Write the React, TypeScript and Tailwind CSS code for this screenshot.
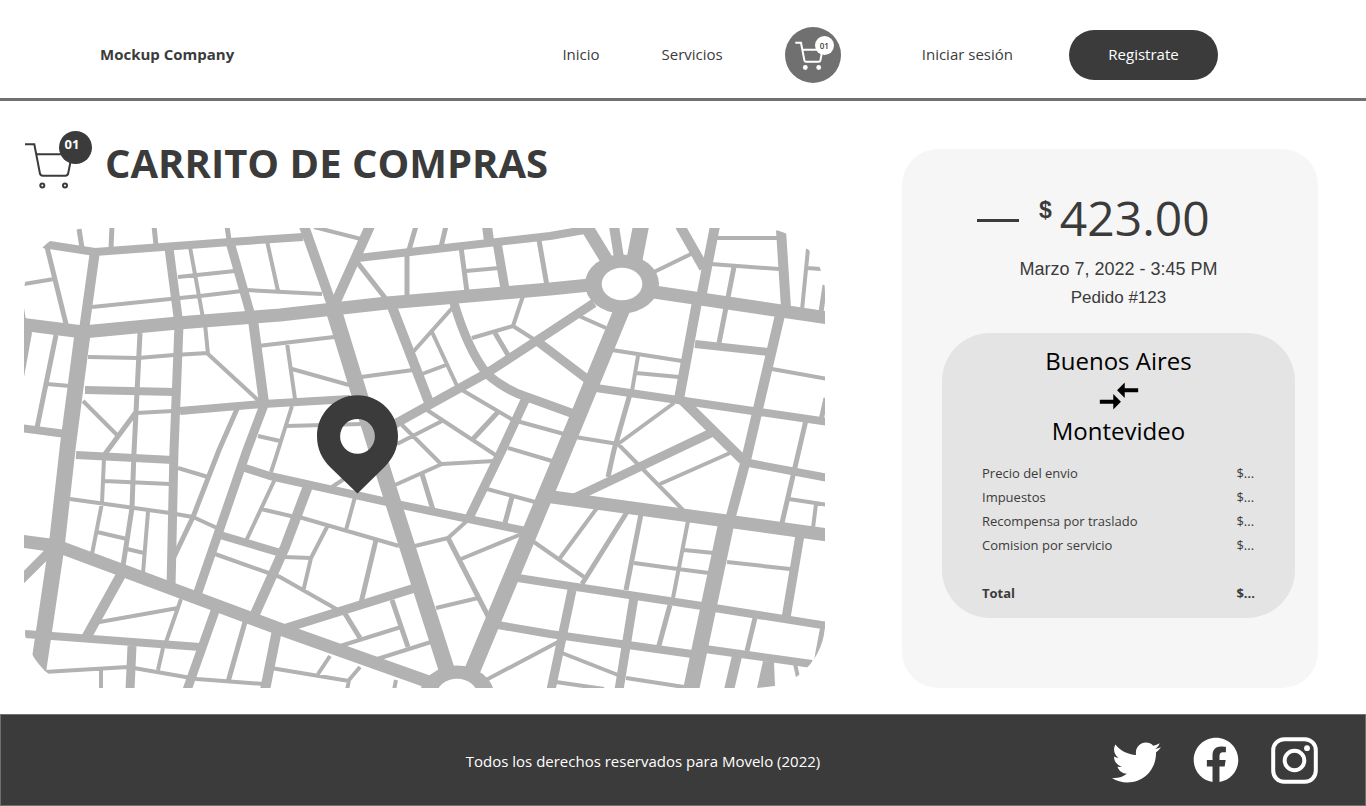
import { FaFacebook, FaTwitter } from "react-icons/fa";
import { MdCompareArrows } from "react-icons/md";

type RoadGroup = { width: number; d: string };

const roads: RoadGroup[] = [
  {
    width: 16,
    d: "M83 330 68 445 57 543 38 672M333 308 359 393 385 477 450 680M626 300 560 460 470 676M641 226 634 262M727 520 691 690",
  },
  {
    width: 13,
    d: "M20 324 83 332 178 323 280 315 387 303 550 289 590 285M654 292 828 318M20 541 57 546 280 629 432 683M545 496 828 535M586 226 608 262",
  },
  {
    width: 10,
    d: "M95 251 84 330M253 320 264 403M304 226 333 308M370 226 334 306M487 226 489 241M391 304 430 405M680 226 704 268M781 230 786 308M780 315 746 460 731 516M682 400 743 460M122 573 86 638M277 630 265 690M737 656 729 690M614 226 619 258M308 486 285 547 255 614M697 302 679 399M715 226 701 298",
  },
  {
    width: 9,
    d: "M169 248 179 325 174 450 171 588M230 242 251 316M264 405 247 450 197 595M497 242 505 289M454 303Q468 350 487 374Q505 390 527 397L574 414M393 425 487 373 550 332 594 303M537 341 587 379M527 396 502 450 469 518M711 433 572 499M20 581 49 552M215 611 187 690M132 646 130 690M283 629 415 588M572 590 551 690M634 597 619 690M800 535 786 618",
  },
  {
    width: 8,
    d: "M43 244 95 252 230 242 303 237M358 258 550 236 590 229M180 411 263 404 350 399M76 455 173 460M596 388 828 422M25 634 200 647M245 468 270 476 387 502 526 531M220 535 284 554M518 578 550 583 702 606 828 626M498 625 550 634 692 654M695 344 768 352M85 390 175 392M20 428 66 434M705 649 812 664M749 463 828 478",
  },
  {
    width: 5,
    d: "M79 229 82 248M112 226 111 248M154 226 156 245M227 226 229 240M47 247 67 328M56 335 37 428M136 412 105 454M237 409 219 450 193 517 173 559M416 226 409 250M446 226 441 247M357 262 386 299M407 252 407 299M461 247 467 292M539 240 547 286M495 333 508 355M498 412 472 440M734 267 719 343M825 285 821 312M826 398 821 420M806 420 799 450 782 523M630 394 614 450 608 477M245 622 228 682M376 540 361 603M344 612 360 638M392 600 408 647M422 474 433 510M448 538 488 616M512 497 505 523M627 512 582 584M641 514 626 590M670 605 658 649M755 618 747 651M140 333 134 452 132 508 123 566",
  },
  {
    width: 4,
    d: "M190 247 203 318M205 324 208 354 260 402M178 277 235 271M92 307 170 299 200 296 242 291M267 241 278 291M246 290 322 294M24 284 54 279M47 384 70 386M88 357 138 358 174 355 208 353M83 401 118 436M136 413 173 411M258 436 280 441M292 406 275 460 271 472M258 346 334 337M314 227 361 239M466 271 499 268M361 377 413 370M454 306 413 352M432 332 458 388M422 374 446 365M523 296 513 326 472 338M513 326 535 340M462 390 513 420 564 434M427 410 500 458M508 448 552 461M397 444 444 420M401 424 442 465M286 426 362 424M287 343 295 399M292 369 349 385M654 272 691 254M717 238 779 238M711 264 779 269M808 249 802 310M807 268 821 269M579 316 606 328M612 350 682 361M638 356 632 391M636 373 679 377M772 369 828 379M674 403 618 444 575 437M618 444 683 510M660 484 730 453M94 623 178 608M181 599 166 642M163 648 158 670M44 672 128 667 197 679 264 684M101 669 101 690M70 499 170 513 193 517 217 528M104 458 102 503 92 554M104 481 170 484M97 532 127 539M148 512 143 573M127 549 144 553M178 468 208 477M275 479 246 541M261 509 295 517M215 554 280 577 338 610M355 497 346 530M299 517 399 546M327 527 311 558 303 592M284 557 311 558M337 647 401 627M374 660 431 642M330 656 318 674M271 668 349 681M360 667 349 680 347 690M396 680 394 690M332 487 347 477M395 485 442 464 494 461M415 546 448 538 468 520M461 559 524 533M436 608 478 598M487 489 535 502M486 680 558 642M534 542 584 577M597 508 560 558M634 563 678 569 709 573M688 521 673 598M684 550 714 553M562 653 618 675M556 682 604 689M626 678 684 687M727 562 790 569M795 664 798 677M789 499 828 505M816 504 813 528",
  },
];

function CityMap() {
  return (
    <svg viewBox="24 228 801 460" className="block h-auto w-full" role="img" aria-label="Mapa del envio">
      <defs>
        <clipPath id="map-frame">
          <rect x="24" y="228" width="801" height="460" rx="65" />
        </clipPath>
      </defs>
      <g clipPath="url(#map-frame)">
        <g fill="none" stroke="#b2b2b2" strokeLinejoin="round">
          {roads.map((group) => (
            <path key={group.width} d={group.d} strokeWidth={group.width} />
          ))}
        </g>
        <g fill="#b2b2b2">
          <ellipse cx="622" cy="284" rx="37" ry="29.500" />
          <ellipse cx="457" cy="695" rx="37" ry="29.500" />
          <path d="M24 308 26 320 32 333 24 377ZM763 661 774 662 775 686 757 688ZM820 628 825 621V640L812 670 806 672 814 660Z" />
        </g>
        <g fill="#fff">
          <ellipse cx="622" cy="284" rx="20.300" ry="16.200" />
          <ellipse cx="457" cy="695" rx="20.300" ry="16.200" />
        </g>
      </g>
      <path
        fill="#3b3b3b"
        fillRule="evenodd"
        d="M357.500 395.300C380 395.300 398 413.500 398 436C398 449 392.500 459 384 467.500L357.500 493.500 330.500 467.500C322 459 317 449 317 436C317 413.500 335 395.300 357.500 395.300ZM357.500 419A17.400 17.400 0 1 0 357.500 453.800A17.400 17.400 0 1 0 357.500 419Z"
      />
    </svg>
  );
}

function HeaderCart() {
  return (
    <a
      href="#carrito"
      aria-label="Carrito"
      className="relative ml-[62px] block size-14 rounded-full bg-[#707070] text-white"
    >
      <svg viewBox="0 0 56 56" className="size-14" fill="none" stroke="currentColor" strokeWidth="2">
        <path d="M10.300 15.800h5.700l3.400 17.600q.3 1.400 1.700 1.400h12.600q1.400 0 1.700-1.400l2-10.400M17.500 22.700h18" />
        <g fill="currentColor" stroke="none">
          <circle cx="20.300" cy="40.500" r="2.400" />
          <circle cx="33.700" cy="40.500" r="2.400" />
        </g>
      </svg>
      <span className="absolute top-[9px] right-[7px] flex size-[19px] items-center justify-center rounded-full bg-white text-[8px] font-semibold text-[#3b3b3b]">
        01
      </span>
    </a>
  );
}

function TitleCart() {
  return (
    <div className="relative h-[60px] w-[68px] shrink-0">
      <svg viewBox="24 131 68 60" className="h-[60px] w-[68px]" fill="none" stroke="#3b3b3b" strokeWidth="2">
        <path d="M25 144.300h9.300l5.600 29q.5 2.500 3 2.500h22.300q2.500 0 3-2.500l2.800-14M36.500 154.300h28" />
        <circle cx="42.300" cy="185.500" r="2" />
        <circle cx="65" cy="185.500" r="2" />
      </svg>
      <span className="absolute top-0 right-0 flex size-[33px] items-center justify-center rounded-full bg-[#3b3b3b] pr-[7px] pb-[6px] text-[13px] font-bold text-white">
        01
      </span>
    </div>
  );
}

const costs = ["Precio del envio", "Impuestos", "Recompensa por traslado", "Comision por servicio"];

function OrderCard() {
  return (
    <aside className="mt-[18px] rounded-[36px] bg-[#f6f6f6] pt-[42px] pr-[23px] pb-[70px] pl-10 text-[#3b3b3b]">
      <div className="flex h-14 items-center pl-[35px]">
        <span className="mt-[3px] h-[3px] w-[42px] bg-[#3b3b3b]" />
        <span className="ml-5 self-start pt-[5px] font-['Liberation_Sans',sans-serif] text-[23px] leading-7 font-bold">$</span>
        <span className="ml-2 pb-0.5 text-[48px] leading-[54px]">423.00</span>
      </div>
      <p className="mt-2 text-center font-['Liberation_Sans',sans-serif] text-[18px] leading-7">Marzo 7, 2022 - 3:45 PM</p>
      <p className="text-center font-['Liberation_Sans',sans-serif] text-[17px] leading-[30px]">Pedido #123</p>

      <section className="mt-5 rounded-[48px] bg-[#e4e4e4] px-10 pt-3 pb-[13px]">
        <div className="flex flex-col items-center text-2xl leading-8 text-black">
          <h2>Buenos Aires</h2>
          <MdCompareArrows size={46} className="-my-1" />
          <h2>Montevideo</h2>
        </div>
        <table className="mt-[14px] w-full text-left text-[13px] leading-6">
          <tbody>
            {costs.map((label) => (
              <tr key={label}>
                <th scope="row" className="p-0 font-normal">{label}</th>
                <td className="w-[18px] p-0">$...</td>
              </tr>
            ))}
            <tr className="font-bold">
              <th scope="row" className="p-0 pt-6">Total</th>
              <td className="p-0 pt-6">$...</td>
            </tr>
          </tbody>
        </table>
      </section>
    </aside>
  );
}

export default function App() {
  return (
    <div className="bg-white font-['Open_Sans','Noto_Sans',sans-serif] text-[#3b3b3b]">
      <header className="flex h-[101px] items-center border-b-[3px] border-[#707070] pt-3 pr-[148px] pl-[100px] text-[15px]">
        <a href="#" className="pb-0.5 font-bold">Mockup Company</a>
        <nav className="ml-auto flex items-center">
          <a href="#inicio" className="pb-0.5">Inicio</a>
          <a href="#servicios" className="ml-[62px] pb-0.5">Servicios</a>
          <HeaderCart />
          <a href="#sesion" className="ml-[81px] pb-0.5">Iniciar sesión</a>
          <button type="button" className="ml-14 h-[50px] w-[149px] rounded-full bg-[#3b3b3b] pb-0.5 text-white">
            Registrate
          </button>
        </nav>
      </header>

      <main className="grid grid-cols-[801fr_416fr] gap-[77px] pt-[30px] pr-12 pb-[26px] pl-6">
        <div>
          <div className="flex items-start gap-[13px]">
            <TitleCart />
            <h1 className="text-[40px] leading-[64px] font-bold">CARRITO DE COMPRAS</h1>
          </div>
          <div className="mt-[33px]">
            <CityMap />
          </div>
        </div>
        <OrderCard />
      </main>

      <footer className="flex h-[92px] items-center border border-[#707070] bg-[#3b3b3b] pr-[47px] pl-[173px] text-[15px] text-white">
        <p className="flex-1 pt-0.5 text-center">Todos los derechos reservados para Movelo (2022)</p>
        <div className="flex items-center gap-8">
          <a href="#twitter" aria-label="Twitter" className="pt-1"><FaTwitter size={49} /></a>
          <a href="#facebook" aria-label="Facebook"><FaFacebook size={46} /></a>
          <a href="#instagram" aria-label="Instagram">
            <svg viewBox="0 0 47 47" className="size-[47px]" fill="none" stroke="currentColor" strokeWidth="4">
              <rect x="2.200" y="2.200" width="42.600" height="42.600" rx="11" />
              <circle cx="23.500" cy="23.500" r="9.800" />
              <circle cx="36" cy="11.200" r="2.900" fill="currentColor" stroke="none" />
            </svg>
          </a>
        </div>
      </footer>
    </div>
  );
}
